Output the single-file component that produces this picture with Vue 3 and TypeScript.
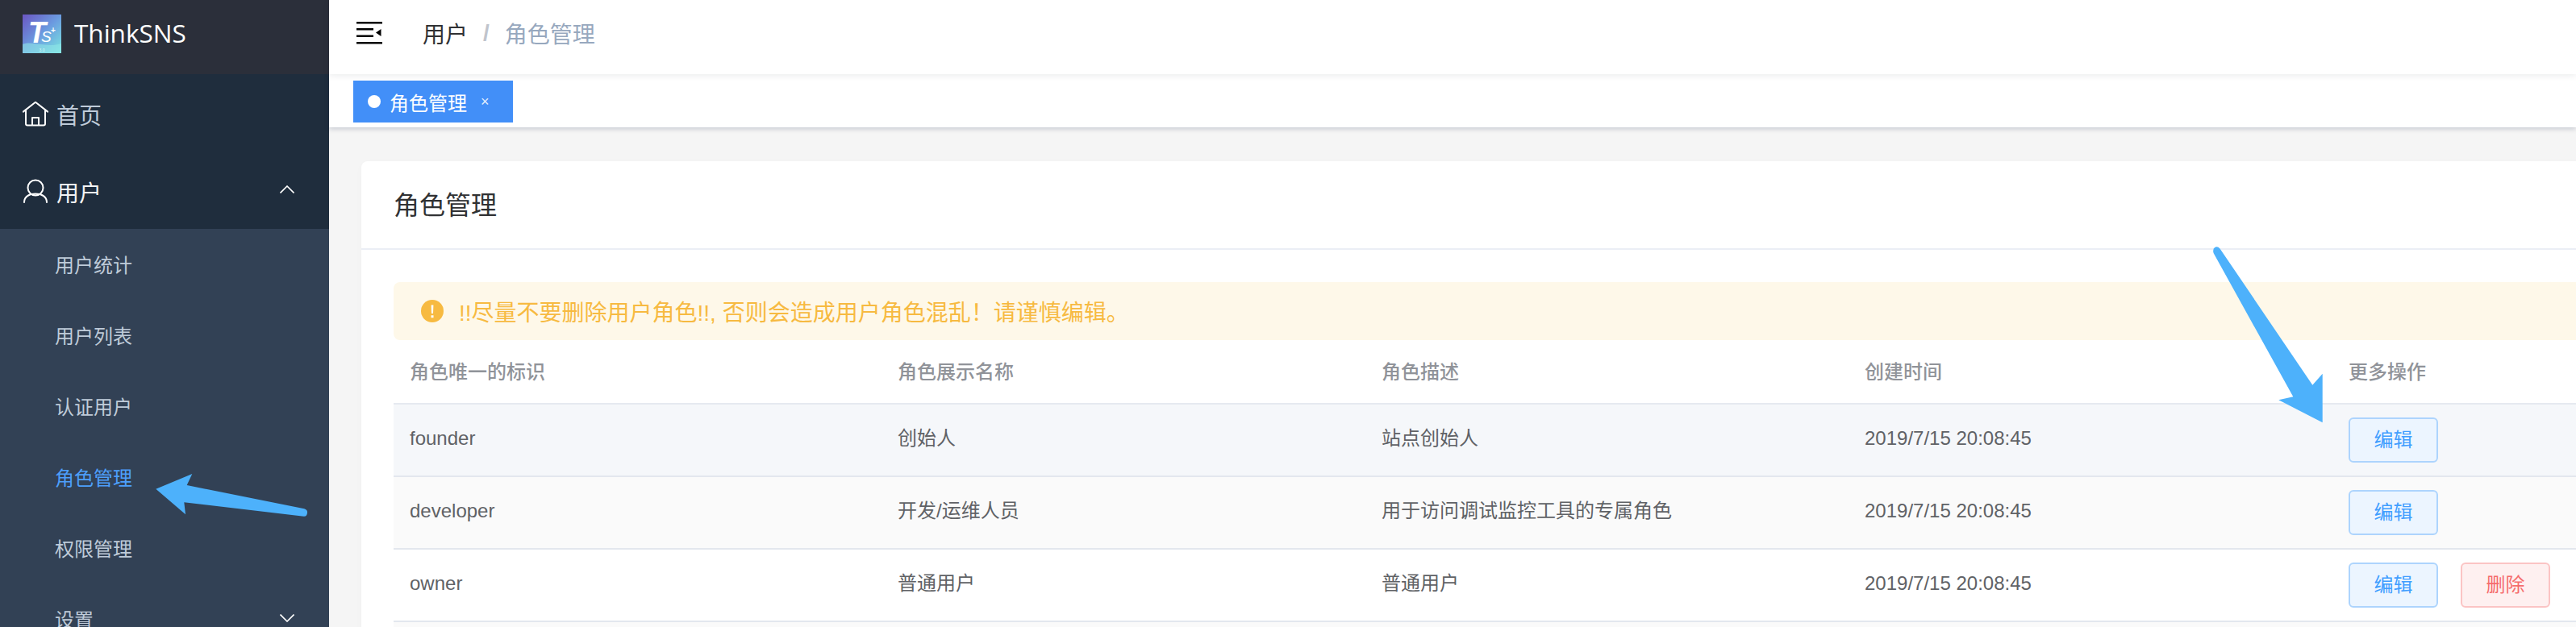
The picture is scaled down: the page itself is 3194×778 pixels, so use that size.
<template>
  <div class="layout">
    <aside class="sidebar">
      <div class="brand">
        <svg class="logo" width="48" height="48" viewBox="0 0 48 48">
          <defs>
            <linearGradient id="logo-bg" x1="0" y1="0" x2="1" y2="1">
              <stop offset="0" stop-color="#6a55c2" />
              <stop offset="0.5" stop-color="#6b9be0" />
              <stop offset="1" stop-color="#7be8e0" />
            </linearGradient>
          </defs>
          <rect width="48" height="48" fill="url(#logo-bg)" />
          <path d="M0 37C12 32 30 42 48 36V48H0Z" fill="#8fe6e6" opacity="0.6" />
          <text x="7" y="35" class="logo-t">T</text>
          <text x="23" y="34" class="logo-s">S</text>
          <text x="35" y="23" class="logo-plus">+</text>
          <text x="24" y="46" class="logo-ver">3.0</text>
        </svg>
        <span class="brand-name">ThinkSNS</span>
      </div>

      <nav class="menu">
        <div class="menu-item">
          <svg class="menu-icon" width="32" height="32" viewBox="0 0 32 32">
            <path d="M0.8 12.6 16 0.8 31.2 12.6M4 10V27.5a2 2 0 0 0 2 2H26a2 2 0 0 0 2-2V10M12 29V20H20V29" />
          </svg>
          <span>首页</span>
        </div>
        <div class="menu-item open">
          <svg class="menu-icon" width="32" height="32" viewBox="0 0 32 32">
            <circle cx="16" cy="11" r="9.5" />
            <path d="M2 29C2 22 8 18.5 16 18.5S30 22 30 29" />
          </svg>
          <span>用户</span>
          <svg class="chevron" width="18" height="10" viewBox="0 0 18 10">
            <path d="M0.5 9.5 9 1 17.5 9.5" />
          </svg>
        </div>
        <ul class="submenu">
          <li v-for="item in subMenu" :key="item" :class="{ active: item === '角色管理' }">{{ item }}</li>
          <li class="has-arrow">
            设置
            <svg class="chevron" width="18" height="10" viewBox="0 0 18 10">
              <path d="M0.5 0.5 9 9 17.5 0.5" />
            </svg>
          </li>
        </ul>
      </nav>
    </aside>

    <main class="main">
      <header class="navbar">
        <svg class="fold" width="32" height="28" viewBox="0 0 32 28">
          <path d="M0 0H32V2.5H0ZM0 8H21V10.5H0ZM0 16.500H21V19H0ZM0 25H32V27.500H0ZM24 13.500 30.500 9V18Z" />
        </svg>
        <span class="crumb">用户</span>
        <span class="crumb-sep">/</span>
        <span class="crumb-last">角色管理</span>
      </header>

      <div class="tags">
        <div class="tag">
          <i class="tag-dot"></i>
          <span>角色管理</span>
          <span class="tag-close">×</span>
        </div>
      </div>

      <section class="card">
        <div class="card-header">角色管理</div>
        <div class="card-body">
          <div class="alert">
            <svg width="28" height="28" viewBox="0 0 28 28">
              <circle cx="14" cy="14" r="14" fill="#f7ba41" />
              <path d="M12.600 6.500H15.400L15 17H13ZM12.500 19.200H15.500V22.200H12.500Z" fill="#fff" />
            </svg>
            <span>!!尽量不要删除用户角色!!, 否则会造成用户角色混乱！请谨慎编辑。</span>
          </div>

          <table class="roles">
            <colgroup>
              <col style="width: 605px" />
              <col style="width: 600px" />
              <col style="width: 599px" />
              <col style="width: 600px" />
              <col />
            </colgroup>
            <thead>
              <tr>
                <th v-for="col in columns" :key="col">{{ col }}</th>
              </tr>
            </thead>
            <tbody>
              <tr v-for="(role, index) in roles" :key="role.id" :class="rowClass(index)">
                <td class="latin">{{ role.id }}</td>
                <td class="cjk">{{ role.name }}</td>
                <td class="cjk">{{ role.desc }}</td>
                <td class="latin">{{ role.created }}</td>
                <td class="ops">
                  <div class="actions">
                    <button v-if="role.id" class="btn btn-edit">编辑</button>
                    <button v-if="role.removable" class="btn btn-del">删除</button>
                  </div>
                </td>
              </tr>
            </tbody>
          </table>
        </div>
      </section>
    </main>

    <!-- annotation arrows drawn over the screenshot -->
    <svg class="arrows" width="3194" height="778" viewBox="0 0 3194 778">
      <path d="M193.300 606.700 238.300 588 231.700 602 377.300 631.300Q381.500 632.500 381 636.500 380.500 641 376.700 640.700L228.300 623.300 230 638.300Z" />
      <path d="M2744.700 314.300Q2743 309 2746.500 306.800 2749.500 305 2752.500 308.500L2867.300 477.700 2879.700 463.700V524.300L2825.300 496.300 2843.300 492.300Z" />
    </svg>
  </div>
</template>

<script setup lang="ts">
interface Role {
  id: string
  name: string
  desc: string
  created: string
  removable: boolean
}

const subMenu: string[] = ['用户统计', '用户列表', '认证用户', '角色管理', '权限管理']

const columns: string[] = ['角色唯一的标识', '角色展示名称', '角色描述', '创建时间', '更多操作']

const roles: Role[] = [
  { id: 'founder', name: '创始人', desc: '站点创始人', created: '2019/7/15 20:08:45', removable: false },
  { id: 'developer', name: '开发/运维人员', desc: '用于访问调试监控工具的专属角色', created: '2019/7/15 20:08:45', removable: false },
  { id: 'owner', name: '普通用户', desc: '普通用户', created: '2019/7/15 20:08:45', removable: true },
  { id: '', name: '', desc: '', created: '', removable: false },
]

const rowClass = (index: number): string => {
  if (index === 0) return 'row-hover'
  return index % 2 === 1 ? 'row-stripe' : ''
}
</script>

<style>
html,
body {
  margin: 0;
  overflow: hidden;
}
</style>

<style scoped>
.layout {
  position: relative;
  display: flex;
  width: 3194px;
  height: 778px;
  overflow: hidden;
  background: #f5f5f5;
  font-family: "Liberation Sans", "Noto Sans CJK SC", sans-serif;
}

.sidebar {
  flex: 0 0 408px;
  background: #324155;
}

.brand {
  display: flex;
  align-items: center;
  height: 92px;
  padding: 0 0 8px 28px;
  box-sizing: border-box;
  background: #2b2f3a;
}

.logo-t {
  font: italic 700 36px "Liberation Sans", sans-serif;
  fill: #fff;
}

.logo-s {
  font: italic 400 19px "Liberation Sans", sans-serif;
  fill: #fff;
}

.logo-plus {
  font: 700 10px "Liberation Sans", sans-serif;
  fill: #fff;
}

.logo-ver {
  font: 400 5px "Liberation Sans", sans-serif;
  fill: #d8f7f5;
  text-anchor: middle;
}

.brand-name {
  margin: 0 0 3px 16px;
  color: #fff;
  font-family: "Open Sans", sans-serif;
  font-size: 31.5px;
}

.menu-item {
  display: flex;
  align-items: center;
  height: 96px;
  padding: 4px 0 0 28px;
  box-sizing: border-box;
  background: #1f2d3d;
  color: #bfcbd9;
  font-size: 28px;
}

.menu-item.open {
  color: #f4f4f5;
}

.menu-item span {
  margin-left: 10px;
}

.menu-icon {
  fill: none;
  stroke: #fff;
  stroke-width: 2;
  stroke-linecap: round;
  stroke-linejoin: round;
}

.chevron {
  margin-left: auto;
  margin-right: 43px;
  fill: none;
  stroke: #fff;
  stroke-width: 1.6;
}

.menu-item .chevron {
  margin-bottom: 7px;
}

.submenu {
  margin: 0;
  padding: 0;
  list-style: none;
}

.submenu li {
  display: flex;
  align-items: center;
  height: 88px;
  padding: 0 0 2px 68px;
  box-sizing: border-box;
  color: #bfcbd9;
  font-size: 24px;
}

.submenu li.active {
  color: #4d9ffb;
}

.submenu li .chevron {
  margin-bottom: 1px;
}

.main {
  flex: 1;
  min-width: 0;
}

.navbar {
  position: relative;
  z-index: 2;
  display: flex;
  align-items: center;
  height: 92px;
  padding: 0 0 10px 34px;
  box-sizing: border-box;
  background: #fff;
  box-shadow: 0 2px 8px rgba(0, 21, 41, 0.08);
  font-size: 28px;
}

.fold {
  margin-right: 50px;
  fill: #000;
}

.crumb {
  color: #303133;
}

.crumb-sep {
  margin: 0 19px;
  color: #c0c4cc;
  font-weight: 700;
}

.crumb-last {
  color: #97a8be;
}

.tags {
  position: relative;
  z-index: 1;
  height: 66px;
  padding: 8px 0 0 30px;
  box-sizing: border-box;
  background: #fff;
  box-shadow: 0 2px 6px rgba(0, 21, 60, 0.2);
}

.tag {
  display: flex;
  align-items: center;
  width: 198px;
  height: 52px;
  padding-left: 18px;
  box-sizing: border-box;
  background: #428ff8;
  color: #fff;
  font-size: 24px;
}

.tag-dot {
  width: 16px;
  height: 16px;
  margin-right: 11px;
  border-radius: 50%;
  background: #fff;
}

.tag-close {
  margin-left: 17px;
  font-size: 18px;
  opacity: 0.85;
}

.card {
  width: 3200px;
  margin: 42px 0 0 40px;
  border-radius: 8px;
  background: #fff;
  box-shadow: 0 2px 12px rgba(0, 0, 0, 0.02);
}

.card-header {
  height: 110px;
  padding: 0 40px;
  box-sizing: border-box;
  border-bottom: 2px solid #ebeef5;
  color: #303133;
  font-size: 32px;
  line-height: 110px;
}

.card-body {
  padding: 40px;
}

.alert {
  display: flex;
  align-items: center;
  gap: 19px;
  height: 72px;
  padding-left: 34px;
  box-sizing: border-box;
  border-radius: 8px;
  background: #fef8e9;
  color: #f7ba41;
  font-size: 28px;
}

.roles {
  width: 100%;
  table-layout: fixed;
  border-collapse: collapse;
  font-size: 24px;
}

.roles th {
  height: 74px;
  padding: 0 20px 4px;
  border-bottom: 2px solid #e6e9f0;
  color: #909399;
  font-weight: 500;
  text-align: left;
  vertical-align: middle;
}

.roles td {
  padding-left: 20px;
  padding-right: 20px;
  border-bottom: 2px solid #e3e7ee;
  color: #606266;
}

.roles td.latin {
  height: 84px;
  padding-top: 0;
  padding-bottom: 4px;
}

.roles td.cjk {
  height: 78px;
  padding-top: 0;
  padding-bottom: 10px;
}

.roles td.ops {
  height: 88px;
  padding-top: 0;
  padding-bottom: 0;
}

.row-hover td {
  background: #f5f7fa;
}

.row-stripe td {
  background: #fafafa;
}

.actions {
  display: flex;
  gap: 28px;
}

.btn {
  width: 111px;
  height: 56px;
  padding: 0 0 5px;
  border: 2px solid;
  border-radius: 6px;
  font-family: inherit;
  font-size: 24px;
}

.btn-edit {
  border-color: #add4fd;
  background: #ecf5ff;
  color: #409eff;
}

.btn-del {
  border-color: #fbc4c4;
  background: #fef0f0;
  color: #f56c6c;
}

.arrows {
  position: absolute;
  top: 0;
  left: 0;
  z-index: 5;
  pointer-events: none;
  fill: #4db1fb;
}
</style>
